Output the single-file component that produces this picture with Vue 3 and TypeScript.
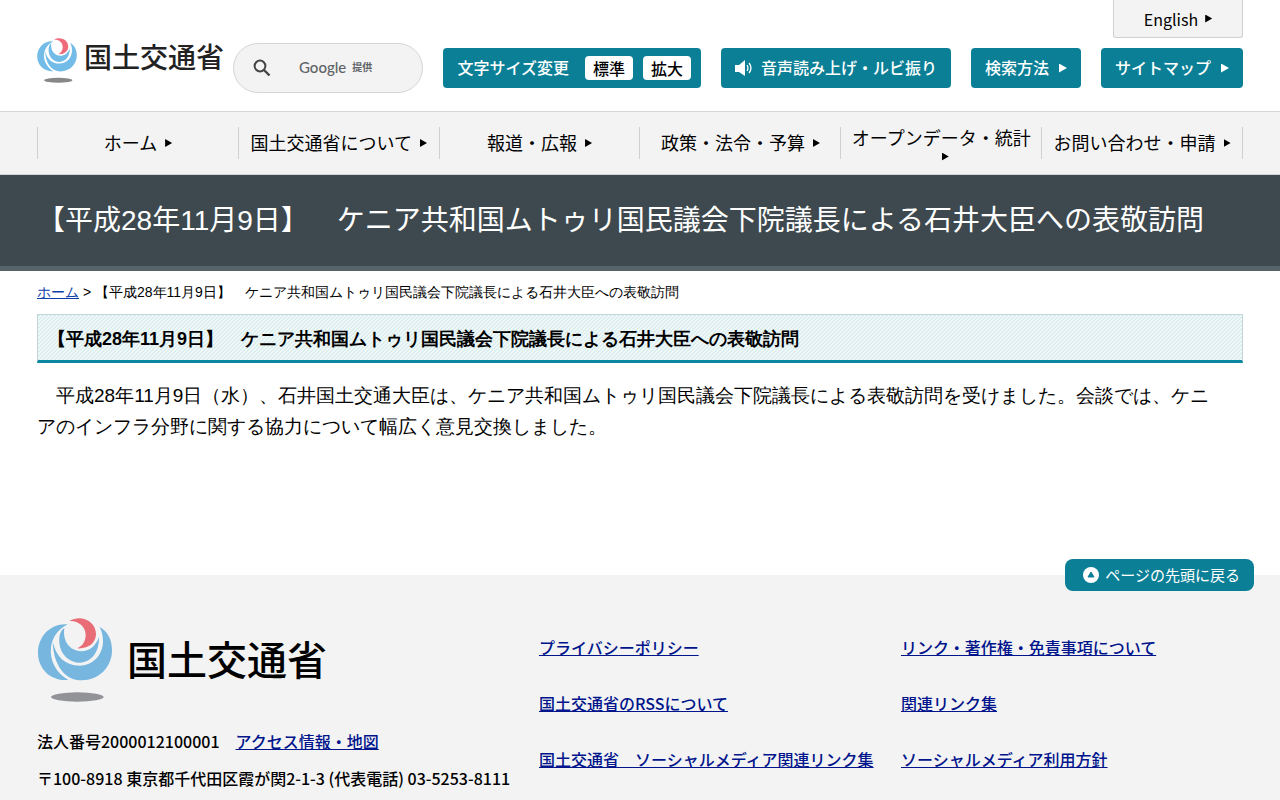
<script setup lang="ts">
import { ref } from 'vue'

interface NavItem {
  label: string
  href: string
}

const title = '【平成28年11月9日】　ケニア共和国ムトゥリ国民議会下院議長による石井大臣への表敬訪問'

const navItems: NavItem[] = [
  { label: 'ホーム', href: '#home' },
  { label: '国土交通省について', href: '#about' },
  { label: '報道・広報', href: '#report' },
  { label: '政策・法令・予算', href: '#policy' },
  { label: 'オープンデータ・統計', href: '#statistics' },
  { label: 'お問い合わせ・申請', href: '#contact' },
]

const footerLinks: NavItem[] = [
  { label: 'プライバシーポリシー', href: '#privacy' },
  { label: 'リンク・著作権・免責事項について', href: '#link' },
  { label: '国土交通省のRSSについて', href: '#rss' },
  { label: '関連リンク集', href: '#related' },
  { label: '国土交通省　ソーシャルメディア関連リンク集', href: '#social' },
  { label: 'ソーシャルメディア利用方針', href: '#social-policy' },
]

const keyword = ref('')
const large = ref(false)
</script>

<template>
  <div id="top" class="page" lang="ja">
    <header class="header">
      <a class="logo" href="#home">
        <svg class="emblem" viewBox="54 53 222 252" aria-hidden="true">
          <path class="blue" d="M143 72C92 68 54 108 54 157C54 207 94 243 145 239C108 218 88 180 93 140C97 110 116 86 143 72Z" />
          <path class="blue" d="M133 83C120 92 117 107 118 127C121 163 148 187 180 187C212 187 238 157 237 111C226 138 208 153 184 153C150 151 127 124 133 83Z" />
          <path class="blue" d="M238 79C264 93 276 119 276 150C276 201 236 240 185 240C135 240 101 196 98 124C108 169 137 196 178 196C219 196 250 164 249 119C248 100 244 89 238 79Z" />
          <path class="red" d="M148 62C185 41 228 64 228 101C228 128 205 146 172 144C188 137 197 122 197 104C197 80 177 61 148 62Z" />
          <ellipse class="shadow" cx="172" cy="290" rx="79" ry="14" />
        </svg>
        <span>国土交通省</span>
      </a>
      <a class="english" href="#english">English<i class="arrow"></i></a>
      <div class="tools">
        <form class="search" role="search" @submit.prevent>
          <button class="search-button" type="submit" aria-label="検索">
            <svg viewBox="0 0 18 18" aria-hidden="true">
              <circle cx="7" cy="7" r="5.4" fill="none" stroke="currentColor" stroke-width="2" />
              <path d="M11 11L16.5 16.5" stroke="currentColor" stroke-width="2.4" />
            </svg>
          </button>
          <input id="keyword" v-model="keyword" class="search-input" type="text" />
          <label v-show="!keyword" class="search-label" for="keyword"><b>Google</b><small>提供</small></label>
        </form>
        <div class="tool size">
          <span>文字サイズ変更</span>
          <button type="button" @click="large = false">標準</button>
          <button type="button" @click="large = true">拡大</button>
        </div>
        <a class="tool" href="#voice">
          <svg class="speaker" viewBox="0 0 18 16" aria-hidden="true">
            <path d="M0 5H4L10 0V16L4 12H0Z" fill="currentColor" />
            <path d="M12 5Q14 8 12 11M14 3Q18 8 14 13" fill="none" stroke="currentColor" stroke-width="1.3" />
          </svg>
          <span>音声読み上げ・ルビ振り</span>
        </a>
        <a class="tool" href="#search"><span>検索方法</span><i class="arrow"></i></a>
        <a class="tool" href="#sitemap"><span>サイトマップ</span><i class="arrow"></i></a>
      </div>
    </header>

    <nav class="nav">
      <ul>
        <li v-for="item in navItems" :key="item.label">
          <a :href="item.href"><span>{{ item.label }}</span><i class="arrow"></i></a>
        </li>
      </ul>
    </nav>

    <h1 class="banner">{{ title }}</h1>

    <main class="main">
      <p class="crumbs"><a href="#home">ホーム</a> &gt; {{ title }}</p>
      <h2>{{ title }}</h2>
      <p class="body" :class="{ large }">　平成28年11月9日（水）、石井国土交通大臣は、ケニア共和国ムトゥリ国民議会下院議長による表敬訪問を受けました。会談では、ケニアのインフラ分野に関する協力について幅広く意見交換しました。</p>
    </main>

    <footer class="footer">
      <a class="to-top" href="#top">
        <svg viewBox="0 0 16 16" aria-hidden="true">
          <circle cx="8" cy="8" r="8" fill="#fff" />
          <path d="M8 5L11 10H5Z" fill="#0b7f96" stroke="#0b7f96" stroke-linejoin="round" />
        </svg>
        <span>ページの先頭に戻る</span>
      </a>
      <div class="address">
        <a class="logo footer-logo" href="#home">
          <svg class="emblem" viewBox="54 53 222 252" aria-hidden="true">
            <path class="blue" d="M143 72C92 68 54 108 54 157C54 207 94 243 145 239C108 218 88 180 93 140C97 110 116 86 143 72Z" />
            <path class="blue" d="M133 83C120 92 117 107 118 127C121 163 148 187 180 187C212 187 238 157 237 111C226 138 208 153 184 153C150 151 127 124 133 83Z" />
            <path class="blue" d="M238 79C264 93 276 119 276 150C276 201 236 240 185 240C135 240 101 196 98 124C108 169 137 196 178 196C219 196 250 164 249 119C248 100 244 89 238 79Z" />
            <path class="red" d="M148 62C185 41 228 64 228 101C228 128 205 146 172 144C188 137 197 122 197 104C197 80 177 61 148 62Z" />
            <ellipse class="shadow" cx="172" cy="290" rx="79" ry="14" />
          </svg>
          <span>国土交通省</span>
        </a>
        <p>法人番号2000012100001　<a href="#access">アクセス情報・地図</a></p>
        <p>〒100-8918 東京都千代田区霞が関2-1-3 (代表電話) 03-5253-8111</p>
      </div>
      <ul class="links">
        <li v-for="link in footerLinks" :key="link.label"><a :href="link.href">{{ link.label }}</a></li>
      </ul>
    </footer>
  </div>
</template>

<style>
body {
  margin: 0;
  background: #fff;
}
</style>

<style scoped>
* {
  box-sizing: border-box;
}

.page {
  display: flex;
  flex-direction: column;
  min-height: 100vh;
  color: #000;
  font-family: 'Noto Sans CJK JP', sans-serif;
  font-size: 16px;
}

h1,
h2,
p,
ul {
  margin: 0;
  padding: 0;
}

ul {
  list-style: none;
}

.arrow {
  flex: none;
  width: 7px;
  height: 8px;
  margin-left: 8px;
  background: currentColor;
  clip-path: polygon(0 0, 100% 50%, 0 100%);
}

.header {
  display: grid;
  grid-template-columns: auto 1fr;
  column-gap: 10px;
  padding: 0 37px 18px;
}

.logo {
  display: flex;
  align-items: flex-start;
  color: #222;
  font-weight: 500;
  text-decoration: none;
  white-space: nowrap;
}

.header .logo {
  grid-row: 1 / 3;
  align-self: start;
  gap: 7px;
  width: 186px;
  padding-top: 38px;
  font-size: 28px;
  line-height: 36px;
}

.emblem {
  flex: none;
  width: 40px;
  height: 45px;
}

.blue {
  fill: #73bce8;
}

.red {
  fill: #ef6b7b;
}

.shadow {
  fill: #88888a;
}

.english {
  display: flex;
  align-items: center;
  justify-content: center;
  justify-self: end;
  width: 130px;
  height: 38px;
  border: 1px solid #d0d0d0;
  border-top: 0;
  border-radius: 0 0 3px 3px;
  background: #f3f3f3;
  color: #000;
  text-decoration: none;
}

.english .arrow {
  margin-left: 7px;
}

.tools {
  display: flex;
  align-items: center;
  gap: 20px;
  padding-top: 5px;
}

.search {
  position: relative;
  display: flex;
  flex: 1;
  align-items: center;
  min-width: 0;
  height: 50px;
  padding: 0 19px;
  border: 1px solid #d4d4d4;
  border-radius: 25px;
  background: #f3f3f3;
}

.search-button {
  flex: none;
  width: 18px;
  height: 18px;
  padding: 0;
  border: 0;
  background: none;
  color: #444;
}

.search-button svg {
  display: block;
}

.search-input {
  flex: 1;
  min-width: 0;
  height: 40px;
  padding: 0 8px;
  border: 0;
  outline: 0;
  background: transparent;
  font: inherit;
}

.search-label {
  position: absolute;
  left: 65px;
  display: flex;
  align-items: center;
  gap: 6px;
  padding-bottom: 3px;
  color: #5f6368;
  pointer-events: none;
}

.search-label b {
  font-family: Lato, sans-serif;
  font-size: 15px;
  font-weight: 500;
}

.search-label small {
  font-size: 10px;
  font-weight: 700;
}

.tool {
  display: flex;
  flex: none;
  align-items: center;
  height: 40px;
  padding: 0 14px;
  border-radius: 4px;
  background: #0b7f96;
  color: #fff;
  font-weight: 500;
  text-decoration: none;
}

.tool span,
.to-top span {
  padding-bottom: 2px;
}

.tool .arrow {
  margin-left: 10px;
  width: 8px;
  height: 9px;
}

.size {
  gap: 10px;
  padding-right: 10px;
}

.size span {
  margin-right: 6px;
}

.size button {
  width: 48px;
  height: 24px;
  padding: 0;
  border: 0;
  border-radius: 4px;
  background: #fff;
  color: #000;
  font: inherit;
  line-height: 24px;
}

.speaker {
  width: 18px;
  height: 16px;
  margin-right: 8px;
}

.nav {
  padding: 15px 37px;
  border-top: 1px solid #d4d4d4;
  border-bottom: 1px solid #d4d4d4;
  background: #f3f3f3;
}

.nav ul {
  display: grid;
  grid-template-columns: repeat(6, 1fr);
  border-right: 1px solid #d0d0d0;
}

.nav li {
  height: 32px;
  border-left: 1px solid #d0d0d0;
}

.nav a {
  display: flex;
  flex-wrap: wrap;
  align-items: center;
  align-content: center;
  justify-content: center;
  row-gap: 3px;
  height: 100%;
  padding: 0 8px;
  color: #000;
  font-size: 18px;
  line-height: 22px;
  text-decoration: none;
}

.nav span {
  padding-bottom: 2px;
}

.banner {
  padding: 25px 37px 24px;
  border-bottom: 5px solid #56646a;
  background: #3d494e;
  color: #fff;
  font-family: 'Liberation Sans', 'Noto Sans CJK JP', sans-serif;
  font-size: 28px;
  font-weight: 400;
  line-height: 42px;
  text-spacing-trim: space-all;
}

.main {
  min-height: 304px;
  padding: 10px 37px;
  font-family: 'Liberation Sans', sans-serif;
  text-spacing-trim: space-all;
}

.crumbs {
  font-size: 14px;
  line-height: 22px;
}

.crumbs a {
  color: #0a3ea8;
}

h2 {
  margin-top: 11px;
  padding: 9px 10px 6px;
  border: 1px solid #bfd5d8;
  border-bottom: 3px solid #0b87a0;
  background: linear-gradient(135deg, #dceef0 25%, #f1f8f8 25% 50%, #dceef0 50% 75%, #f1f8f8 75%) 0 0 / 4px 4px;
  font-size: 18px;
  line-height: 30px;
}

.body {
  margin-top: 17px;
  padding-right: 20px;
  font-size: 19px;
  line-height: 31px;
}

.body.large {
  font-size: 24px;
  line-height: 38px;
}

.footer {
  position: relative;
  display: grid;
  flex: 1;
  grid-template-columns: 502fr 704fr;
  padding: 43px 37px 0;
  background: #f3f3f3;
  font-weight: 500;
}

.to-top {
  position: absolute;
  top: -16px;
  right: 26px;
  display: flex;
  align-items: center;
  gap: 6px;
  height: 32px;
  padding: 0 14px 0 18px;
  border-radius: 8px;
  background: #0b7f96;
  color: #fff;
  font-size: 15px;
  font-weight: 400;
  text-decoration: none;
}

.to-top svg {
  width: 16px;
  height: 16px;
}

.footer-logo {
  gap: 14px;
  margin-bottom: 21px;
  color: #000;
  font-size: 40px;
  line-height: 80px;
}

.footer-logo .emblem {
  width: 76px;
  height: 84px;
}

.footer-logo .shadow {
  fill: #929299;
}

.footer-logo .blue {
  fill: #76b6df;
}

.footer-logo .red {
  fill: #e96d76;
}

.address p {
  line-height: 37px;
  white-space: nowrap;
}

.footer p a,
.links a {
  color: #00148c;
}

.links {
  display: grid;
  grid-template-columns: 362fr 342fr;
  align-content: start;
  row-gap: 32px;
  padding-top: 17px;
}

.links li {
  line-height: 24px;
  white-space: nowrap;
}
</style>
